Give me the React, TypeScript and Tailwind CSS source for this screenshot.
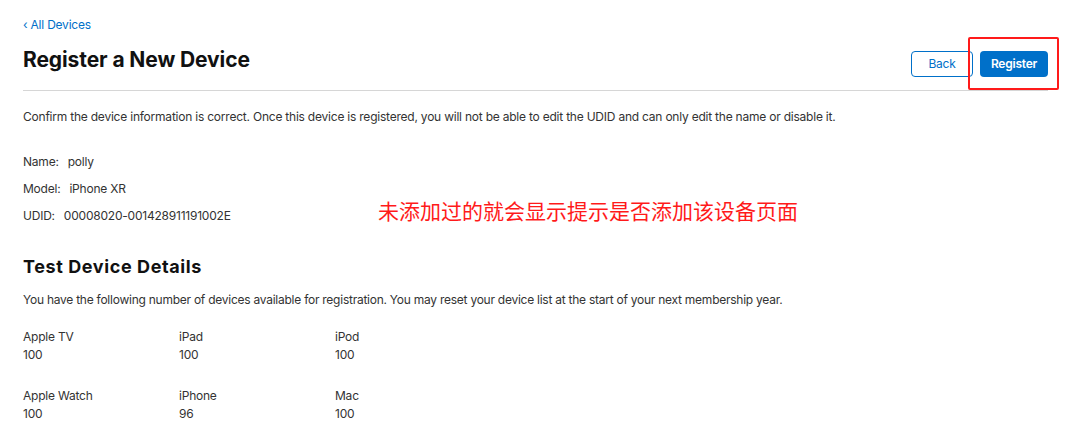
const counts = [
  { label: 'Apple TV', value: '100' },
  { label: 'iPad', value: '100' },
  { label: 'iPod', value: '100' },
  { label: 'Apple Watch', value: '100' },
  { label: 'iPhone', value: '96' },
  { label: 'Mac', value: '100' },
];

const App = () => {
  return (
    <div className="relative w-[1068px] h-[438px] bg-white text-[#333] font-['Inter','Liberation_Sans',sans-serif] overflow-hidden">
      <div className="px-[23px] pr-[20px] pt-[17px] tracking-[-0.22px]">
        <a className="block text-[12px] leading-[16px] text-[#0070c9]">‹ All Devices</a>

        <div className="flex items-start justify-between mt-[13px]">
          <h1 className="text-[21px] leading-[28px] font-bold text-[#111] tracking-[-0.1px]">Register a New Device</h1>
          <div className="flex gap-[7px] mt-[5px]">
            <button className="w-[62px] h-[26px] rounded-[4px] border border-[#0070c9] text-[12px] text-[#0070c9]">Back</button>
            <button className="w-[68px] h-[26px] rounded-[4px] bg-[#0070c9] text-[12px] font-semibold text-white">Register</button>
          </div>
        </div>

        <div className="h-px bg-[#d6d6d6] mt-[13px]" />

        <p className="text-[12px] leading-[16px] mt-[18px]">
          Confirm the device information is correct. Once this device is registered, you will not be able to edit the UDID and can only edit the name or disable it.
        </p>

        <div className="mt-[29px] flex flex-col gap-[11px] text-[12px] leading-[16px]">
          <div><span className="mr-[9px]">Name:</span>polly</div>
          <div><span className="mr-[9px]">Model:</span>iPhone XR</div>
          <div><span className="mr-[9px]">UDID:</span>00008020-001428911191002E</div>
        </div>

        <h2 className="text-[18px] leading-[24px] font-bold text-[#111] mt-[31px] tracking-[0.6px]">Test Device Details</h2>

        <p className="text-[12px] leading-[16px] mt-[13px] tracking-[-0.25px]">
          You have the following number of devices available for registration. You may reset your device list at the start of your next membership year.
        </p>

        <div className="grid grid-cols-[156px_156px_156px] gap-y-[23px] mt-[20px] text-[12px] leading-[18px]">
          {counts.map((c) => (
            <div key={c.label}>
              <div>{c.label}</div>
              <div>{c.value}</div>
            </div>
          ))}
        </div>
      </div>

      {/* annotation overlay */}
      <div className="absolute left-[968px] top-[37px] w-[91px] h-[53px] border-2 border-[#ff1a1a] rounded-[2px]" />
      <div className="absolute left-[378px] top-[197px] text-[21px] leading-[26px] text-[#ff1a1a] font-['Noto_Sans_CJK_SC',sans-serif]">
        未添加过的就会显示提示是否添加该设备页面
      </div>
    </div>
  );
};

export default App;
